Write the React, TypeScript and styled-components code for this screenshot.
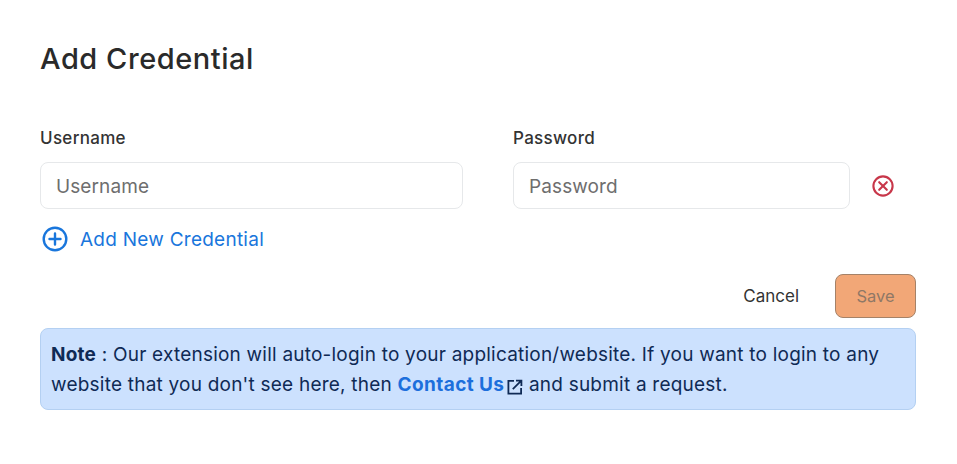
import React from "react";
import styled, { createGlobalStyle } from "styled-components";

const GlobalStyle = createGlobalStyle`
  html, body {
    margin: 0;
    padding: 0;
    background: #fff;
  }
  body {
    font-family: "Inter", "Noto Sans", sans-serif;
  }
`;

const PlusIcon = () => (
  <svg width="26" height="26" viewBox="0 0 26 26" fill="none" stroke="#1976dc" strokeWidth="2.4" strokeLinecap="round">
    <circle cx="13" cy="13" r="11.3" />
    <path d="M13 7.5v11M7.5 13h11" />
  </svg>
);

const RemoveIcon = () => (
  <svg width="22" height="22" viewBox="0 0 22 22" fill="none" stroke="#c8374a" strokeWidth="2.1" strokeLinecap="round">
    <circle cx="11" cy="11" r="9.6" />
    <path d="M7.2 7.2l7.6 7.6M14.8 7.2l-7.6 7.6" />
  </svg>
);

const ExternalIcon = () => (
  <svg width="16" height="16" viewBox="0 0 16 16" fill="none" stroke="#0f2a55" strokeWidth="1.8">
    <path d="M7 1.9H1.4v12.7h12.7V9" />
    <path d="M5.8 10.2l8-8M9 1.6h5.4V7" />
  </svg>
);

export default function App() {
  return (
    <>
      <GlobalStyle />
      <Dialog>
        <Title>Add Credential</Title>
        <FieldRow>
          <Field $width={423}>
            <Label>Username</Label>
            <Input placeholder="Username" />
          </Field>
          <Field $width={337}>
            <Label>Password</Label>
            <Input placeholder="Password" type="password" />
          </Field>
          <RemoveButton aria-label="Remove credential">
            <RemoveIcon />
          </RemoveButton>
        </FieldRow>
        <AddRow>
          <PlusIcon />
          <AddLabel>Add New Credential</AddLabel>
        </AddRow>
        <Actions>
          <CancelButton>Cancel</CancelButton>
          <SaveButton disabled>Save</SaveButton>
        </Actions>
        <Note>
          <strong>Note</strong> : Our extension will auto-login to your application/website. If you want to login to any
          <br />
          website that you don't see here, then{" "}
          <ContactLink href="#">
            Contact Us
            <ExternalIcon />
          </ContactLink>{" "}
          and submit a request.
        </Note>
      </Dialog>
    </>
  );
}

const Dialog = styled.div`
  box-sizing: border-box;
  width: 957px;
  height: 464px;
  padding: 41px 41px 0 40px;
  display: flex;
  flex-direction: column;
`;

const Title = styled.h2`
  margin: 0;
  font-size: 29px;
  line-height: 36px;
  font-weight: 450;
  letter-spacing: 0.55px;
  color: #2a2a2a;
`;

const FieldRow = styled.div`
  display: flex;
  align-items: flex-end;
  gap: 50px;
  margin-top: 50px;
`;

const Field = styled.div<{ $width: number }>`
  width: ${(p) => p.$width}px;
  display: flex;
  flex-direction: column;
  gap: 13px;
`;

const Label = styled.label`
  font-size: 17px;
  line-height: 22px;
  font-weight: 450;
  letter-spacing: 0.3px;
  color: #333;
`;

const Input = styled.input`
  box-sizing: border-box;
  width: 100%;
  height: 47px;
  padding: 1px 15px 0;
  border: 1px solid #e6e8ea;
  border-radius: 8px;
  background: #fff;
  outline: none;
  font-family: inherit;
  font-size: 19px;
  letter-spacing: 0.1px;
  color: #333;

  &::placeholder {
    color: #6e6e6e;
    opacity: 1;
  }
`;

const RemoveButton = styled.button`
  display: flex;
  align-items: center;
  margin: 0 0 12px -28px;
  padding: 0;
  border: 0;
  background: none;
`;

const AddRow = styled.div`
  display: flex;
  align-items: center;
  gap: 12px;
  height: 26px;
  margin: 17px 0 0 2px;
  font-size: 19px;
  line-height: 26px;
  letter-spacing: 0.25px;
  color: #1976dc;
`;

const AddLabel = styled.span`
  margin-top: 1px;
`;

const Actions = styled.div`
  display: flex;
  justify-content: flex-end;
  align-items: center;
  gap: 36px;
  margin-top: 22px;
`;

const CancelButton = styled.button`
  padding: 0;
  border: 0;
  background: none;
  font-family: inherit;
  font-size: 17px;
  color: #333;
`;

const SaveButton = styled.button`
  box-sizing: border-box;
  width: 81px;
  height: 44px;
  border: 1px solid #a58268;
  border-radius: 8px;
  background: #f2a777;
  font-family: inherit;
  font-size: 16.5px;
  color: #8f7866;
`;

const Note = styled.div`
  box-sizing: border-box;
  margin-top: 10px;
  height: 82px;
  padding: 11px 10px;
  border: 1px solid #b4d0f2;
  border-radius: 8px;
  background: #cce1fe;
  font-size: 19px;
  line-height: 30px;
  letter-spacing: 0.22px;
  color: #0f2a55;
  white-space: nowrap;

  strong {
    font-weight: 700;
  }
`;

const ContactLink = styled.a`
  display: inline-flex;
  align-items: center;
  gap: 3px;
  font-weight: 700;
  letter-spacing: 0.4px;
  color: #1c6fdc;
  text-decoration: none;

  svg {
    margin-top: 3px;
  }
`;
